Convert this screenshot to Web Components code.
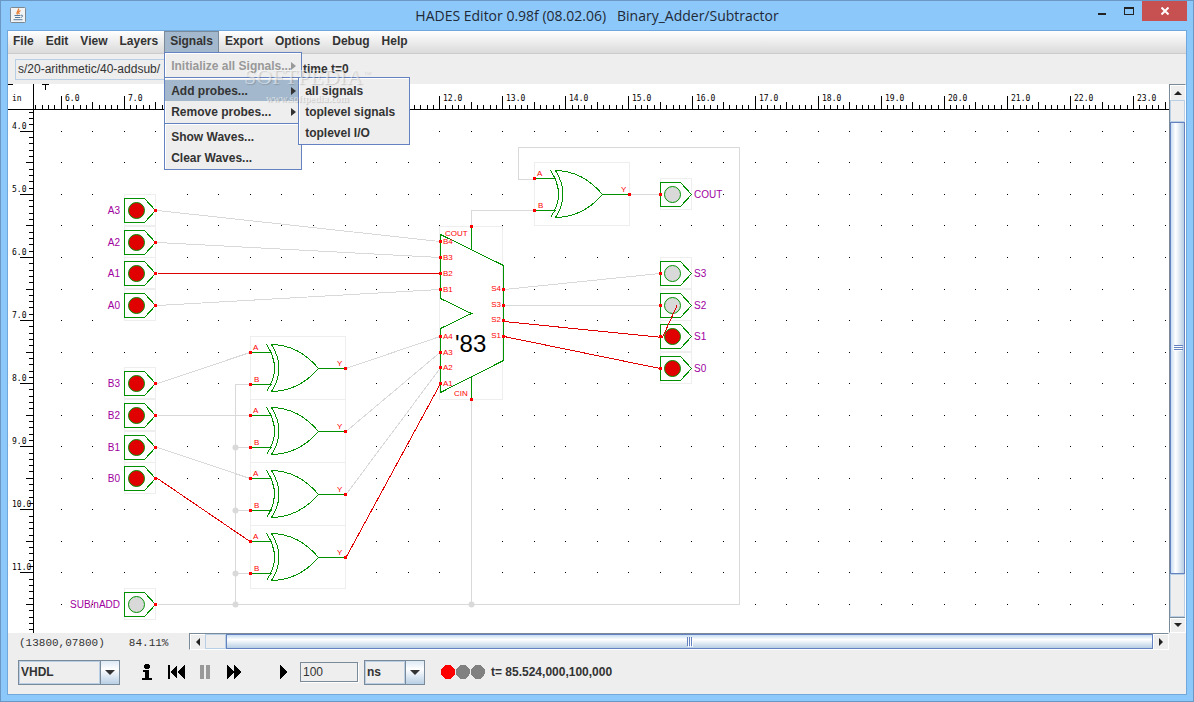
<!DOCTYPE html>
<html lang="en">
<head>
<meta charset="utf-8">
<title>HADES Editor 0.98f</title>
<style>
html,body{height:100%}
body{margin:0;font:12px/16px "Liberation Sans",Arial,sans-serif;color:#333;
  --frame:#8dc8fb;--panel:#eee;--edge:#6382bf;--sel:#a3b8cc;--shade:#7a8a99}
.wide{min-width:138px}
</style>
</head>
<body>
<hades-window>
  <span slot="title">HADES Editor 0.98f (08.02.06) &nbsp; Binary_Adder/Subtractor</span>
  <hades-menubar>
    <hades-menu label="File"></hades-menu>
    <hades-menu label="Edit"></hades-menu>
    <hades-menu label="View"></hades-menu>
    <hades-menu label="Layers"></hades-menu>
    <hades-menu label="Signals" open>
      <hades-popup class="wide">
        <hades-item label="Initialize all Signals..." more disabled></hades-item>
        <hades-separator></hades-separator>
        <hades-item label="Add probes..." more active>
          <hades-popup>
            <hades-item label="all signals"></hades-item>
            <hades-item label="toplevel signals"></hades-item>
            <hades-item label="toplevel I/O"></hades-item>
          </hades-popup>
        </hades-item>
        <hades-item label="Remove probes..." more></hades-item>
        <hades-separator></hades-separator>
        <hades-item label="Show Waves..."></hades-item>
        <hades-item label="Clear Waves..."></hades-item>
      </hades-popup>
    </hades-menu>
    <hades-menu label="Export"></hades-menu>
    <hades-menu label="Options"></hades-menu>
    <hades-menu label="Debug"></hades-menu>
    <hades-menu label="Help"></hades-menu>
  </hades-menubar>
  <hades-pathbar></hades-pathbar>
  <hades-workspace>
    <hades-schematic></hades-schematic>
    <hades-scrollbar slot="vertical" direction="vertical"></hades-scrollbar>
    <hades-scrollbar slot="horizontal" direction="horizontal"></hades-scrollbar>
  </hades-workspace>
  <hades-simbar></hades-simbar>
</hades-window>
<hades-watermark></hades-watermark>

<script>
const define = (name, html, setup) => customElements.define(name, class extends HTMLElement {
  constructor() {
    super();
    this.attachShadow({mode: 'open'}).innerHTML = html;
  }
  connectedCallback() { if (setup) setup(this, this.shadowRoot); }
});

define('hades-window', `
<style>
:host{display:flex;flex-direction:column;height:100vh;box-sizing:border-box;border:1px solid #6b97c4;background:var(--frame);padding:0 6px 6px}
header{display:grid;grid-template-columns:1fr auto 1fr;height:29px;flex:none}
.icon{margin:6px 0 0 3px}
h1{margin:0;font:14px/29px "Open Sans","Noto Sans",sans-serif;color:#1e2a36;white-space:nowrap}
.buttons{display:flex;justify-content:flex-end;align-items:flex-start}
button{border:0;padding:0;background:none;width:27px;height:20px;display:grid;place-items:center}
button.close{width:45px;background:#c75050}
main{flex:1;min-height:0;display:flex;flex-direction:column;border:1px solid #70a8dc;background:var(--panel)}
</style>
<header>
  <svg class="icon" width="16" height="16" viewBox="0 0 16 16" aria-hidden="true">
    <rect x=".5" y=".5" width="15" height="15" rx="1" fill="#f1f3f5" stroke="#7b8791"/>
    <path d="M8.5 1.5C9.5 3.5 5.5 4.500 7.500 7.500M10.500 3.500C8 5 8 5.500 9.500 7" fill="none" stroke="#e8792b" stroke-width="1.300"/>
    <path d="M4.500 8.500h6M5 10.500h5M3.500 12.700h9M11 8.200c2.500-.5 2 2-.3 2.300" fill="none" stroke="#557a9b"/>
  </svg>
  <h1><slot name="title"></slot></h1>
  <div class="buttons">
    <button aria-label="Minimize"><svg width="8" height="8"><path d="M0 6h8v2H0z" fill="#222"/></svg></button>
    <button aria-label="Maximize"><svg width="10" height="8" shape-rendering="crispEdges"><path d="M0 0h10v8H0zM1 2v5h8V2z" fill="#222" fill-rule="evenodd"/></svg></button>
    <button class="close" aria-label="Close"><svg width="8" height="8"><path d="M.5 .5l7 7M7.500 .5l-7 7" stroke="#fff" stroke-width="2"/></svg></button>
  </div>
</header>
<main><slot></slot></main>`);

define('hades-menubar', `
<style>
:host{display:flex;flex:none;height:22px;border-bottom:1px solid #ccc;background:linear-gradient(#fff,#dadada);position:relative;z-index:2}
::slotted(:first-child){margin-left:-1px}
</style><slot></slot>`);

define('hades-menu', `
<style>
:host{display:block;position:relative;height:22px}
button{font:bold 12px/20px "Liberation Sans",Arial,sans-serif;color:#333;background:none;border:0;padding:0 6px 2px;height:22px;display:block}
:host([open]) button{background:var(--sel);box-shadow:inset 1px 1px var(--shade),inset -1px 0 var(--shade)}
::slotted(hades-popup){position:absolute;left:0;top:21px}
</style><button></button><slot></slot>`,
(el, root) => root.querySelector('button').textContent = el.getAttribute('label'));

define('hades-popup', `
<style>
:host{display:flex;flex-direction:column;min-width:112px;box-sizing:border-box;border:1px solid var(--edge);padding:2px 0 1px;background:var(--panel);box-shadow:inset 1px 1px #fff}
</style><slot></slot>`);

define('hades-item', `
<style>
:host{display:block;position:relative}
button{font:bold 12px/20px "Liberation Sans",Arial,sans-serif;color:#333;background:none;border:0;box-sizing:border-box;width:100%;height:21px;padding:1px 5px 0 6px;display:flex;align-items:center;justify-content:space-between;white-space:nowrap}
svg{display:none}
:host([more]) svg{display:block}
:host([active]) button{background:var(--sel)}
:host([disabled]) button{color:#999}
::slotted(hades-popup){position:absolute;left:133px;top:-3px;z-index:1}
</style>
<button><span></span><svg width="5" height="8"><path d="M0 0l5 4-5 4z" fill="currentColor"/></svg></button><slot></slot>`,
(el, root) => {
  root.querySelector('span').textContent = el.getAttribute('label');
  root.querySelector('button').disabled = el.hasAttribute('disabled');
});

define('hades-separator', `
<style>:host{display:block;height:1px;margin:1px 0;border-top:1px solid var(--edge);background:#fff}</style>`);

define('hades-pathbar', `
<style>
:host{display:flex;flex:none;align-items:center;height:30px;gap:4px;padding:0 7px}
input{box-sizing:border-box;width:284px;height:21px;border:1px solid #b8cfe5;background:var(--panel);padding:0 2px;color:#333;font:12px/16px "Liberation Sans",Arial,sans-serif}
span{white-space:nowrap;font-weight:bold}
</style>
<input aria-label="Design" value="s/20-arithmetic/40-addsub/"><span>time t=0</span>`);

define('hades-workspace', `
<style>
:host{flex:1;min-height:0;display:grid;grid-template:minmax(0,1fr) 17px / minmax(0,1fr) 17px}
footer{display:flex;min-width:0}
.info{display:flex;gap:24px;padding-left:11px;width:181px;box-sizing:border-box;flex:none;font:11px/20px "Liberation Mono",monospace;white-space:nowrap}
::slotted([slot=horizontal]){flex:1}
</style>
<slot></slot><slot name="vertical"></slot>
<footer><div class="info"><span>(13800,07800)</span><span>84.11%</span></div><slot name="horizontal"></slot></footer>`);

define('hades-scrollbar', `
<style>
:host{display:flex;box-sizing:border-box;border:1px solid var(--shade);border-right-color:#fff;border-bottom-color:#fff}
:host([direction=vertical]){flex-direction:column}
button{flex:none;width:15px;height:15px;padding:0;border:0;background:var(--panel);box-shadow:inset 1px 1px #fff;display:grid;place-items:center;color:#222}
.before,.after{box-sizing:border-box;background:var(--panel);border:1px solid #b8cfe5}
.thumb{flex:1;box-sizing:border-box;border:1px solid var(--edge);display:grid;place-items:center}
:host([direction=horizontal]) .thumb{background:linear-gradient(#c8ddf2,#fff 35%,#b8cfe5)}
:host([direction=vertical]) .thumb{background:linear-gradient(90deg,#c8ddf2,#fff 35%,#b8cfe5)}
:host([direction=horizontal]) .before{width:21px}
:host([direction=vertical]) .before{height:22px}
:host([direction=vertical]) .after{height:43px}
:host([direction=horizontal]) .after{display:none}
:host([direction=vertical]) button:first-child{border-bottom:1px solid var(--shade)}
:host([direction=vertical]) button:last-child{border-top:1px solid var(--shade)}
:host([direction=horizontal]) button:first-child{border-right:1px solid var(--shade)}
:host([direction=vertical]) .grip{transform:rotate(90deg)}
:host([direction=horizontal]) .arrow{transform:rotate(-90deg)}
.flip{transform:rotate(180deg)}
:host([direction=horizontal]) .flip{transform:rotate(90deg)}
svg{display:block}
</style>
<button aria-label="Back"><svg class="arrow" width="8" height="4"><path d="M0 4l4-4 4 4z" fill="currentColor"/></svg></button>
<div class="before"></div>
<div class="thumb"><svg class="grip" width="6" height="10" shape-rendering="crispEdges"><path d="M.5 0v9M2.500 0v9M4.500 0v9" stroke="#6382bf"/><path d="M1.500 1v9M3.500 1v9M5.500 1v9" stroke="#fff"/></svg></div>
<div class="after"></div>
<button aria-label="Forward"><svg class="flip" width="8" height="4"><path d="M0 4l4-4 4 4z" fill="currentColor"/></svg></button>`);

define('hades-combo', `
<style>
:host{display:grid;grid-template-columns:1fr 19px;box-sizing:border-box;height:25px;border:1px solid var(--shade)}
select{grid-area:1/1/2/3;appearance:none;border:0;outline:0;border-radius:0;background:transparent;color:#333;font:bold 12px/16px "Liberation Sans",Arial,sans-serif;padding:0 2px;z-index:1}
.value{grid-area:1/1;border:1px solid #b8cfe5}
.drop{grid-area:1/2;border-left:1px solid var(--shade);background:linear-gradient(#dce9f5,#fff 35%,#b8cfe5);display:grid;place-items:center}
</style>
<div class="value"></div>
<div class="drop"><svg width="10" height="5"><path d="M0 0h10l-5 5z" fill="#333"/></svg></div>
<select><option></option></select>`,
(el, root) => {
  root.querySelector('option').textContent = el.getAttribute('value');
  root.querySelector('select').setAttribute('aria-label', el.getAttribute('label'));
});

define('hades-simbar', `
<style>
:host{display:flex;flex:none;align-items:center;height:44px;padding:0 10px;box-sizing:border-box}
.lang{width:102px;margin-right:17px}
button{border:0;background:none;padding:0;width:20px;height:20px;margin-right:9px;display:grid;place-items:center}
.run{margin:0 7px 0 20px}
input{box-sizing:border-box;width:58px;height:20px;border:1px solid var(--shade);background:var(--panel);box-shadow:1px 1px #fff;padding:0 2px;color:#333;font:12px/16px "Liberation Sans",Arial,sans-serif;margin-right:6px}
.unit{width:61px;margin-right:16px}
.time{font-weight:bold;margin-left:5px;white-space:nowrap}
svg{display:block}
</style>
<hades-combo class="lang" value="VHDL" label="Language"></hades-combo>
<button aria-label="Info"><svg width="10" height="16" shape-rendering="crispEdges"><path d="M3 0h4v1h1v3H7v1H3V4H2V1h1zM1 6h6v8h3v2H0v-2h3V8H1z"/></svg></button>
<button aria-label="Rewind"><svg width="17" height="14" shape-rendering="crispEdges"><path d="M0 0h2v14H0zM9 0v14L2 7zM17 0v14l-8-7z"/></svg></button>
<button aria-label="Pause"><svg width="11" height="14" shape-rendering="crispEdges"><path d="M0 0h4v14H0zM6 0h4v14H6z" fill="#999"/></svg></button>
<button aria-label="Run"><svg width="15" height="14" shape-rendering="crispEdges"><path d="M0 0l7 7-7 7zM7 0l8 7-8 7z"/></svg></button>
<button class="run" aria-label="Single step"><svg width="7" height="14" shape-rendering="crispEdges"><path d="M0 0l7 7-7 7z"/></svg></button>
<input aria-label="Step" value="100">
<hades-combo class="unit" value="ns" label="Unit"></hades-combo>
<svg width="45" height="16" aria-hidden="true" shape-rendering="crispEdges"><circle cx="7" cy="8" r="7" fill="#f00"/><circle cx="22" cy="8" r="7" fill="#808080"/><circle cx="37" cy="8" r="7" fill="#808080"/></svg>
<span class="time">t= 85.524,000,100,000</span>`);

define('hades-schematic', `
<style>
:host{display:block;min-width:0;min-height:0;background:#fff;overflow:hidden}
svg{display:block;width:100%;height:100%}
text{font-family:"Liberation Sans",Arial,sans-serif}
.scale{font:8px "DejaVu Sans Mono",monospace;fill:#000}
.name{font-size:10px;fill:#a000a0}
.port{font-size:8px;fill:#f00}
.chip{font-size:24px;fill:#000}
.body{fill:none;stroke:#009000}
.box{fill:#fff;stroke:#eee}
.wire{fill:none;stroke:#d9d9d9}
.hot{stroke:#e00000}
</style>
<svg><g id="sheet" transform="translate(-8 -84)"></g></svg>`,
(el, root) => {
  const UNIT = 63.08, X6 = 61.2, Y4 = 131.3;

  const draw = (right, bottom) => {
    const out = [];
    const line = (pts, cls) => out.push(`<polyline class="wire ${cls || ''}" points="${pts}" shape-rendering="crispEdges"/>`);
    const text = (x, y, s, cls, anchor) => out.push(`<text x="${x}" y="${y}" class="${cls}" text-anchor="${anchor || 'start'}">${s}</text>`);
    const pin = (x, y) => out.push(`<rect x="${x - 1}" y="${y - 1}" width="3" height="3" fill="#f00"/>`);

    // grid dots, one each half inch
    let dots = '';
    for (let x = X6; x < right; x += UNIT / 2) for (let y = Y4; y < bottom; y += UNIT / 2)
      dots += `M${Math.floor(x)} ${Math.floor(y)}h1v1h-1z`;
    out.push(`<path d="${dots}"/>`);

    // rulers
    let ticks = `M8 109H${right}v1H8zM33 84h1V${bottom}h-1zM8 84h5v1H8zM42 84h7v1h-3v5h-1v-5h-3z`;
    const tall = k => k % 10 === 0 ? 13 : k % 5 === 0 ? 7 : 4;
    for (let k = -4, x; (x = Math.floor(X6 + k * UNIT / 10)) < right; k++) {
      ticks += `M${x} ${109 - tall(k)}h1v${tall(k)}h-1z`;
      if (k >= 0 && k % 10 === 0 && x + 26 < right) text(x + 4, 101, (6 + k / 10) + '.0', 'scale');
    }
    for (let k = -3, y; (y = Math.floor(Y4 + k * UNIT / 10)) < bottom; k++) {
      ticks += `M${33 - tall(k)} ${y}h${tall(k)}v1h-${tall(k)}z`;
      if (k >= 0 && k % 10 === 0) text(12, y - 2, (4 + k / 10) + '.0', 'scale');
    }
    out.push(`<path d="${ticks}" shape-rendering="crispEdges"/>`);
    text(12, 101, 'in', 'scale');

    const pad = (x, y, on, name, input) => {
      out.push(`<rect class="box" x="${x + .5}" y="${y - 15.5}" width="31" height="31"/>`,
        `<path class="body" shape-rendering="crispEdges" d="M${x + .5} ${y - 11.5}h20l11 12-11 12h-20z"/>`,
        `<circle cx="${x + 12.5}" cy="${y + .5}" r="8" fill="${on ? '#e00000' : '#d9d9d9'}" stroke="#009000"/>`);
      if (input) text(x - 4, y + 4, name, 'name', 'end'); else text(x + 34, y + 4, name, 'name');
    };
    const inputs = [['A3', 210, 1], ['A2', 242, 1], ['A1', 273, 1], ['A0', 305, 1], ['B3', 383, 1], ['B2', 415, 1], ['B1', 447, 1], ['B0', 478, 1], ['SUB/nADD', 604, 0]];
    const outputs = [['COUT', 194, 0], ['S3', 273, 0], ['S2', 305, 0], ['S1', 336, 1], ['S0', 368, 1]];
    inputs.forEach(([n, y, on]) => pad(124, y, on, n, true));
    outputs.forEach(([n, y, on]) => pad(660, y, on, n, false));

    const gates = [[250, 368], [250, 431], [250, 494], [250, 557], [534, 194]];
    gates.forEach(([x, y]) => {
      out.push(`<g transform="translate(${x}.5 ${y}.5)">
        <rect class="box" x="0" y="-32" width="95" height="63"/>
        <path class="body" shape-rendering="crispEdges" d="M0-16h21M0 16h21M68 0h27M16-24Q32 0 16 23M21-24Q36 0 21 23M20-24Q48-24 68 0Q48 23 20 23"/></g>`);
      text(x + 3, y - 18, 'A', 'port'); text(x + 4, y + 14, 'B', 'port'); text(x + 87, y - 2, 'Y', 'port');
    });

    out.push('<rect class="box" x="439.500" y="226.500" width="63" height="173"/>',
      '<path class="body" shape-rendering="crispEdges" d="M440.500 234.500L503.500 265.500V360.500L440.500 392.500V328.500L471.500 313.500L440.500 298.500zM471.500 227V250M471.500 376V399"/>');
    text(455, 352, "'83", 'chip');
    text(445, 236, 'COUT', 'port');
    text(454, 396, 'CIN', 'port');

    // idle wires
    ['157.5,210.5 440,241.5', '157.5,242.5 440,257.5', '157.5,305.5 440,289.5',
     '157.5,383.5 250,352.5', '157.5,415.5 250,415.5', '157.5,447.5 250,478.5',
     '157.5,604.5 739.5,604.5 739.5,147.5 518.5,147.5 518.5,179.5 534,179.5',
     '250,384.5 235.5,384.5 235.5,604.5', '235.5,447.5 250,447.5', '235.5,510.5 250,510.5', '235.5,573.5 250,573.5',
     '471.5,400 471.5,604.5', '471.5,226 471.5,210.5 534,210.5',
     '346,368.5 440,336.5', '346,431.5 440,352.5', '346,494.5 440,368.5',
     '504,289.5 660,273.5', '504,305.5 660,305.5', '629,194.5 660,194.5'].forEach(p => line(p));
    // driven wires
    ['157.5,273.5 440,273.5', '157.5,478.5 250,541.5', '346,557.5 440,384.5',
     '504,321.5 662.5,337.5 677,305.5', '504,336.5 660,368.5'].forEach(p => line(p, 'hot'));
    [[235, 447], [235, 510], [235, 573], [235, 604], [471, 604]].forEach(([x, y]) =>
      out.push(`<circle cx="${x + .5}" cy="${y + .5}" r="3" fill="#d9d9d9"/>`));

    inputs.forEach(([, y]) => pin(155, y));
    outputs.forEach(([, y]) => pin(660, y));
    gates.forEach(([x, y]) => { pin(x, y - 16); pin(x, y + 16); pin(x + 95, y); });
    [['B4', 241], ['B3', 257], ['B2', 273], ['B1', 289], ['A4', 336], ['A3', 352], ['A2', 367], ['A1', 383]].forEach(([n, y]) => {
      pin(440, y); text(443, y + 3, n, 'port');
    });
    [['S4', 289], ['S3', 305], ['S2', 320], ['S1', 336]].forEach(([n, y]) => {
      pin(503, y); text(501, y + 2, n, 'port', 'end');
    });
    pin(471, 226); pin(471, 399);
    root.getElementById('sheet').innerHTML = out.join('');
  };

  new ResizeObserver(([entry]) =>
    draw(8 + Math.ceil(entry.contentRect.width), 84 + Math.ceil(entry.contentRect.height))).observe(el);
});

define('hades-watermark', `
<style>
:host{position:absolute;left:244px;top:63px;z-index:5;pointer-events:none;display:flex;flex-direction:column;align-items:center;color:rgba(255,255,255,.5);text-shadow:1px 1px 1px rgba(0,0,0,.16)}
b{font:22px/28px "Liberation Serif",serif}
small{font:bold 10px/16px "Liberation Serif",serif}
sup{font:8px/8px "Liberation Sans",sans-serif}
</style><b>SOFTPEDIA<sup>™</sup></b><small>www.softpedia.com</small>`);
</script>
</body>
</html>
